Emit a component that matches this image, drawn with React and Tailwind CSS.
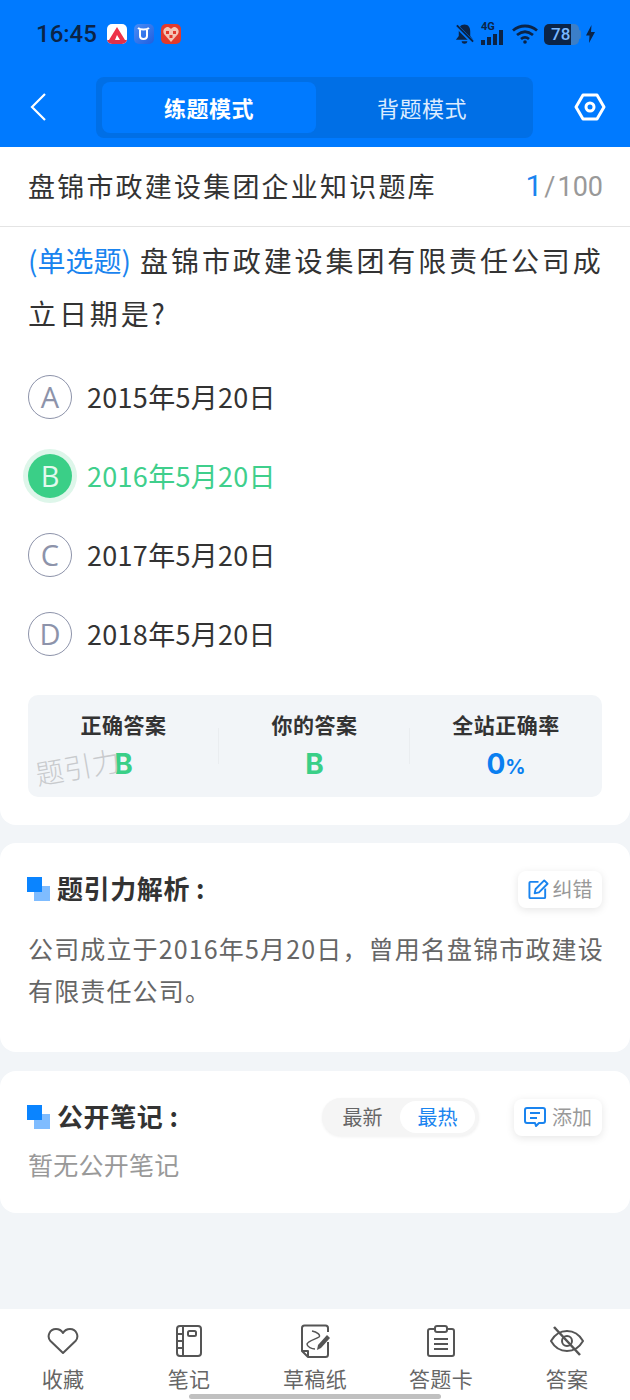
import React from "react"

const font = { fontFamily: '"Noto Sans CJK SC", sans-serif' }

const options = [
    { key: "A", text: "2015年5月20日" },
    { key: "B", text: "2016年5月20日", active: true },
    { key: "C", text: "2017年5月20日" },
    { key: "D", text: "2018年5月20日" },
]

const SectionMark = () => (
    <svg width="23" height="24" viewBox="0 0 23 24" className="shrink-0 -ml-[1px]">
        <rect x="7" y="9" width="16" height="15" fill="#7fbcff" />
        <rect x="0" y="0" width="15" height="15" fill="#0a84ff" />
    </svg>
)

const StatusBar = () => (
    <div className="h-[67px] pl-[36px] pr-[35px] flex items-center justify-between pt-[1px]">
        <div className="flex items-center">
            <span className="text-[24px] leading-none font-medium text-[#0b2447] font-['Roboto']">16:45</span>
            <div className="ml-[10px] flex gap-[7px]">
                <div className="w-[20px] h-[20px] rounded-[5px] bg-white flex flex-col items-center justify-end overflow-hidden">
                    <svg width="16" height="13" viewBox="0 0 16 13"><path d="M8 0L16 13H11L8 8L6 13H0Z" fill="#ee3148" /></svg>
                    <div className="w-full h-[4px] bg-[#e0304a]" />
                </div>
                <div className="w-[20px] h-[20px] rounded-[5px] bg-gradient-to-br from-[#4a8cf5] to-[#1f5fe0] flex items-center justify-center">
                    <svg width="13" height="14" viewBox="0 0 13 14" fill="none" stroke="#fff" strokeWidth="2"><path d="M1 1C3 3 10 3 12 1M3 3V9C3 13 10 13 10 9V3" /></svg>
                </div>
                <div className="w-[20px] h-[20px] rounded-[5px] bg-[#e23a2c] flex flex-col items-center justify-center">
                    <svg width="16" height="15" viewBox="0 0 16 15">
                        <path d="M8 15L1 7C-1 3 2 0 5 0C6 0 7 1 8 2C9 1 10 0 11 0C14 0 17 3 15 7Z" fill="#f3c4b4" />
                        <path d="M3 4H6V7H3ZM10 4H13V7H10ZM6.500 8H9.500V11H6.500Z" fill="#e23a2c" />
                    </svg>
                </div>
            </div>
        </div>
        <div className="flex items-center">
            <svg width="21" height="22" viewBox="0 0 22 22" fill="#0b2447">
                <path d="M11 1C7 1 5 4 5 8V13L2 17H20L17 13V8C17 4 15 1 11 1ZM8 18.500H14C14 22 8 22 8 18.500Z" />
                <path d="M2 2L20 20" stroke="#007aff" strokeWidth="4" />
                <path d="M3 2L20 19" stroke="#0b2447" strokeWidth="2" />
            </svg>
            <div className="ml-[6px] relative w-[25px] h-[22px]">
                <span className="absolute left-0 top-[-2px] text-[11px] leading-[11px] font-bold text-[#0b2447] font-['Roboto']">4G</span>
                <div className="absolute left-0 bottom-0 flex items-end gap-[2px]">
                    <div className="w-[4px] h-[5px] bg-[#0b2447]" />
                    <div className="w-[4px] h-[8px] bg-[#0b2447]" />
                    <div className="w-[4px] h-[11px] bg-[#0b2447]" />
                    <div className="w-[4px] h-[15px] bg-[#0b2447]" />
                </div>
            </div>
            <svg width="26" height="20" viewBox="0 0 26 20" fill="none" stroke="#0b2447" strokeWidth="2.800" className="ml-[6px]">
                <path d="M1 6.500C8 0.500 18 0.500 25 6.500" />
                <path d="M5 11C10 7 16 7 21 11" />
                <path d="M9 15C11.500 13 14.500 13 17 15" />
                <circle cx="13" cy="18" r="1.800" fill="#0b2447" stroke="none" />
            </svg>
            <div className="ml-[6px] w-[35px] h-[21px] rounded-[5px] bg-[#3b7fc9] overflow-hidden relative">
                <div className="h-full w-[27px] bg-[#0b2447]" />
                <span className="absolute inset-0 pl-[7px] text-[17px] leading-[21px] font-medium text-[#7ab8ff] font-['Roboto']">78</span>
            </div>
            <div className="w-[2px] h-[9px] bg-[#3b7fc9] rounded-r-[2px]" />
            <svg width="9" height="18" viewBox="0 0 9 18" fill="#0b2447" className="ml-[5px]"><path d="M5.500 0L0 10.500H3.500L3 18L9 7H5Z" /></svg>
        </div>
    </div>
)

const TopNav = () => (
    <div className="h-[80px] pl-[28px] pr-[24px] flex items-center">
        <svg width="20" height="28" viewBox="0 0 20 28" fill="none" stroke="#fff" strokeWidth="2.200" className="shrink-0 -mt-[1px]">
            <path d="M17 1L4 14L17 27" />
        </svg>
        <div className="ml-[48px] w-[438px] h-[61px] rounded-[8px] bg-[#006fe6] py-[5px] pl-[6px] pr-[5px] flex">
            <div className="w-[214px] h-[51px] rounded-[8px] bg-[#007aff] flex items-center justify-center text-white text-[22px] font-bold tracking-[0.5px]">练题模式</div>
            <div className="flex-1 h-[51px] flex items-center justify-center text-[#dcecff] text-[22px] tracking-[0.5px]">背题模式</div>
        </div>
        <svg width="32" height="28" viewBox="0 0 32 28" fill="none" stroke="#fff" strokeWidth="3" className="ml-[41px] shrink-0">
            <path d="M9 2H23L30 14L23 26H9L2 14Z" strokeLinejoin="round" />
            <circle cx="16" cy="14" r="4" />
        </svg>
    </div>
)

const OptionRow = ({ item }) => (
    <div className="h-[79px] flex items-center">
        {item.active ? (
            <div className="w-[44px] h-[44px] rounded-full bg-[#3acf87] ring-[5px] ring-[#def6ea] flex items-center justify-center text-[#e3f9ee] text-[29px] shrink-0 font-['Open_Sans']">{item.key}</div>
        ) : (
            <div className="w-[44px] h-[44px] rounded-full border-[1.5px] border-[#8d93aa] flex items-center justify-center text-[#8d93aa] text-[29px] shrink-0 font-['Open_Sans']">{item.key}</div>
        )}
        <span className={`ml-[15px] text-[27px] leading-none tracking-[0.3px] ${item.active ? "text-[#3fcf8c]" : "text-[#333333]"}`}>{item.text}</span>
    </div>
)

const TabIcon = ({ name }) => {
    if (name === "heart") return (
        <svg width="32" height="28" viewBox="0 0 32 28" fill="none" stroke="#555" strokeWidth="2">
            <path d="M16 26L3.500 14C-0.500 9.500 2.500 2 9 2C12 2 14.500 3.500 16 6C17.500 3.500 20 2 23 2C29.500 2 32.500 9.500 28.500 14Z" strokeLinejoin="round" />
        </svg>
    )
    if (name === "note") return (
        <svg width="26" height="32" viewBox="0 0 26 32" fill="none" stroke="#555" strokeWidth="2">
            <rect x="1" y="1" width="24" height="30" rx="3" />
            <path d="M7 1V31M1 9H7M1 16H7M1 23H7" />
            <rect x="12" y="6" width="8" height="5" rx="1.500" />
        </svg>
    )
    if (name === "draft") return (
        <svg width="30" height="34" viewBox="0 0 30 34" fill="none" stroke="#555" strokeWidth="2">
            <path d="M8 33L2 27V4C2 2.500 3 1.500 4.500 1.500H25.500C27 1.500 28 2.500 28 4V8M28 18V30.500C28 32 27 33 25.500 33H8V27H2" strokeLinejoin="round" />
            <path d="M12 7C17 8 21 11 19 13C16 15 8 17 7 20C7 23 12 25 15 25" strokeWidth="1.500" />
            <path d="M17 26L18 21L27 11L30 14L21 24Z" fill="#555" stroke="none" />
        </svg>
    )
    if (name === "card") return (
        <svg width="28" height="32" viewBox="0 0 28 32" fill="none" stroke="#555" strokeWidth="2">
            <path d="M7 4H3C2 4 1 5 1 6V29C1 30 2 31 3 31H25C26 31 27 30 27 29V6C27 5 26 4 25 4H21" />
            <rect x="8" y="1" width="12" height="6" rx="2" />
            <path d="M7 14H21M7 19H21M7 24H21" />
        </svg>
    )
    return (
        <svg width="34" height="30" viewBox="0 0 34 30" fill="none" stroke="#555" strokeWidth="2">
            <path d="M1 15C5 8 11 5 17 5C23 5 29 8 33 15C29 22 23 25 17 25C11 25 5 22 1 15Z" />
            <circle cx="17" cy="15" r="5" />
            <path d="M4 1L30 29" strokeWidth="2.500" />
        </svg>
    )
}

const tabs = [
    { icon: "heart", label: "收藏" },
    { icon: "note", label: "笔记" },
    { icon: "draft", label: "草稿纸" },
    { icon: "card", label: "答题卡" },
    { icon: "eye", label: "答案" },
]

const stats = [
    { title: "正确答案", value: "B", color: "text-[#3acf87]" },
    { title: "你的答案", value: "B", color: "text-[#3acf87]" },
]

const App = () => {
    return (
        <div className="w-[630px] h-[1400px] bg-[#f2f5f8] flex flex-col overflow-hidden relative" style={font}>
            {/* Blue header */}
            <div className="bg-[#007aff] h-[147px] shrink-0">
                <StatusBar />
                <TopNav />
            </div>

            {/* Question card */}
            <div className="bg-white h-[678px] shrink-0 rounded-b-[16px]">
                <div className="h-[80px] border-b border-[#e4e4e4] pl-[28px] pr-[27px] flex items-center justify-between pb-[2px]">
                    <span className="text-[27px] leading-none text-[#333333] tracking-[2.2px]">盘锦市政建设集团企业知识题库</span>
                    <span className="text-[27px] leading-none text-[#999999] font-['Roboto'] flex items-baseline">
                        <span className="text-[#1a84ef] text-[30px]">1</span>
                        <span className="mx-[2px]">/</span>100
                    </span>
                </div>
                <div className="px-[28px] pt-[7px]">
                    <p className="text-[28px] leading-[53px] text-[#333333] tracking-[2.900px] -mr-[6px]">
                        <span className="text-[#1a84ef] tracking-normal">(单选题)</span> 盘锦市政建设集团有限责任公司成立日期是?
                    </p>
                    <div className="mt-[17px]">
                        {options.map((item) => (
                            <OptionRow key={item.key} item={item} />
                        ))}
                    </div>
                    <div className="relative mt-[22px] h-[102px] rounded-[10px] bg-[#f2f5f8] flex">
                        {stats.map((col) => (
                            <div key={col.title} className="w-[191px] flex flex-col items-center pt-[14px] relative">
                                <span className="text-[21px] leading-[31px] font-bold text-[#333333] tracking-[0.5px]">{col.title}</span>
                                <span className={`mt-[8px] text-[28px] leading-[32px] font-bold font-['Inter'] ${col.color}`}>{col.value}</span>
                                <div className="absolute right-0 top-[33px] h-[36px] w-[1px] bg-[#eaedf0]" />
                            </div>
                        ))}
                        <div className="flex-1 flex flex-col items-center pt-[14px]">
                            <span className="text-[21px] leading-[31px] font-bold text-[#333333] tracking-[0.5px]">全站正确率</span>
                            <span className="mt-[8px] text-[#0a7ff0] font-bold font-['Inter'] leading-[32px] text-[28px]">0<span className="text-[20px]">%</span></span>
                        </div>
                        <span className="absolute left-[7px] top-[57px] text-[28px] leading-none font-light text-[#c8cacd] -rotate-[10deg] tracking-[0.5px]">题引力</span>
                    </div>
                </div>
            </div>

            {/* Analysis card */}
            <div className="bg-white mt-[18px] h-[209px] shrink-0 rounded-[16px] px-[28px] pt-[27px]">
                <div className="flex items-center justify-between h-[38px]">
                    <div className="flex items-center">
                        <SectionMark />
                        <span className="ml-[7px] text-[26px] font-bold leading-none text-[#333333] tracking-[0.6px] -mt-[2px]">题引力解析<span className="ml-[6px]">:</span></span>
                    </div>
                    <div className="w-[84px] h-[37px] rounded-[8px] bg-white shadow-[0_2px_8px_rgba(0,0,0,0.1)] flex items-center justify-center gap-[4px]">
                        <svg width="21" height="21" viewBox="0 0 22 22" fill="none" stroke="#1a84ef" strokeWidth="2">
                            <path d="M11 3H2.500C2 3 1.500 3.500 1.500 4V19C1.500 19.500 2 20 2.500 20H17C17.500 20 18 19.500 18 19V10" />
                            <path d="M7 15L8 10.500L17 1.500L20.500 5L11.500 14Z" strokeLinejoin="round" />
                        </svg>
                        <span className="text-[20px] leading-none text-[#999999]">纠错</span>
                    </div>
                </div>
                <p className="mt-[19px] text-[25px] leading-[42px] text-[#666666] tracking-[1.15px] -mr-[8px]">公司成立于2016年5月20日，曾用名盘锦市政建设有限责任公司。</p>
            </div>

            {/* Notes card */}
            <div className="bg-white mt-[19px] h-[142px] shrink-0 rounded-[16px] px-[28px] pt-[27px]">
                <div className="flex items-center h-[38px]">
                    <SectionMark />
                    <span className="ml-[7px] text-[26px] font-bold leading-none text-[#333333] tracking-[0.6px] -mt-[2px]">公开笔记<span className="ml-[6px]">:</span></span>
                    <div className="ml-auto w-[157px] h-[38px] rounded-full bg-[#f5f5f5] shadow-[0_1px_3px_rgba(0,0,0,0.06)] py-[3px] pl-[3px] flex items-center">
                        <span className="w-[75px] text-center text-[20px] leading-none text-[#666666]">最新</span>
                        <span className="w-[75px] h-[32px] rounded-full bg-white flex items-center justify-center text-[20px] leading-none text-[#1a84ef]">最热</span>
                    </div>
                    <div className="ml-[35px] w-[88px] h-[37px] rounded-[8px] bg-white shadow-[0_2px_8px_rgba(0,0,0,0.1)] flex items-center justify-center gap-[6px]">
                        <svg width="22" height="20" viewBox="0 0 22 20" fill="none" stroke="#1a84ef" strokeWidth="2">
                            <path d="M3 1H19C20 1 21 2 21 3V14C21 15 20 16 19 16H15L12 19L11 16H3C2 16 1 15 1 14V3C1 2 2 1 3 1Z" strokeLinejoin="round" />
                            <path d="M6 6H16M6 11H13" />
                        </svg>
                        <span className="text-[20px] leading-none text-[#999999]">添加</span>
                    </div>
                </div>
                <p className="mt-[10px] text-[25px] leading-[36px] text-[#999999] tracking-[0.25px]">暂无公开笔记</p>
            </div>

            {/* Bottom tab bar */}
            <div className="mt-auto h-[91px] bg-white flex shrink-0">
                {tabs.map((tab) => (
                    <div key={tab.label} className="w-[126px] flex flex-col items-center pt-[15px]">
                        <div className="h-[34px] flex items-center justify-center"><TabIcon name={tab.icon} /></div>
                        <span className="mt-[5px] text-[21px] leading-[30px] text-[#666666] tracking-[0.3px]">{tab.label}</span>
                    </div>
                ))}
            </div>
            <div className="absolute left-[189px] bottom-[1px] w-[252px] h-[5px] rounded-full bg-[#c0c0c0]" />
        </div>
    )
}

export default App
